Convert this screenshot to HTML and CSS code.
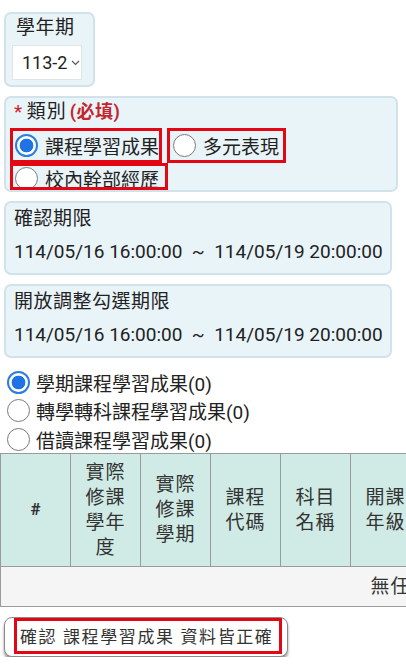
FILE: index.html
```html
<!DOCTYPE html>
<html lang="zh-Hant">
<head>
<meta charset="utf-8">
<link rel="stylesheet" href="styles.css">
</head>
<body>
<div class="page">
  <div class="box box-term">
    <div class="label">學年期</div>
    <div class="select">
      <span class="select-val">113-2</span>
      <svg class="chev" width="9" height="6" viewBox="0 0 9 6"><path d="M1 1 L4.5 4.5 L8 1" fill="none" stroke="#555" stroke-width="1.1"/></svg>
    </div>
  </div>

  <div class="box box-type">
    <div class="label type-label"><span class="req">*</span><span class="type-name">類別</span><span class="must">(必填)</span></div>
    <div class="type-row">
      <label class="opt opt1 marked"><span class="radio checked"></span><span>課程學習成果</span></label>
      <label class="opt opt2 marked"><span class="radio"></span><span>多元表現</span></label>
    </div>
    <div class="type-row">
      <label class="opt opt3 marked"><span class="radio"></span><span>校內幹部經歷</span></label>
    </div>
  </div>

  <div class="box box-date">
    <div class="label">確認期限</div>
    <div class="date">114/05/16 16:00:00 &nbsp;~ &nbsp;114/05/19 20:00:00</div>
  </div>

  <div class="box box-date">
    <div class="label">開放調整勾選期限</div>
    <div class="date">114/05/16 16:00:00 &nbsp;~ &nbsp;114/05/19 20:00:00</div>
  </div>

  <div class="list">
    <label class="list-item"><span class="radio checked"></span><span>學期課程學習成果(0)</span></label>
    <label class="list-item"><span class="radio"></span><span>轉學轉科課程學習成果(0)</span></label>
    <label class="list-item"><span class="radio"></span><span>借讀課程學習成果(0)</span></label>
  </div>

  <div class="table-wrap">
    <table class="grid">
      <colgroup>
        <col class="c"><col class="c"><col class="c"><col class="c"><col class="c"><col class="c">
        <col class="c"><col class="c"><col class="c"><col class="c"><col class="c"><col class="c">
      </colgroup>
      <thead>
        <tr>
          <th class="hash">#</th>
          <th>實際修課學年度</th>
          <th>實際修課學期</th>
          <th>課程代碼</th>
          <th>科目名稱</th>
          <th>開課年級</th>
          <th>修課學分</th>
          <th>成績</th>
          <th>課程類別</th>
          <th>認證狀態</th>
          <th>勾選</th>
          <th>備註</th>
        </tr>
      </thead>
      <tbody>
        <tr><td class="empty" colspan="12">無任何資料</td></tr>
      </tbody>
    </table>
  </div>

  <div class="actions">
    <button class="confirm" type="button"><span class="confirm-text">確認 課程學習成果 資料皆正確</span></button>
  </div>
</div>
</body>
</html>
```

FILE: styles.css
```css
html, body {
  margin: 0;
  padding: 0;
  background: #ffffff;
}
body {
  font-family: Roboto, "Noto Sans CJK TC", sans-serif;
  font-size: 19px;
  color: #222222;
}
.page {
  padding-top: 12px;
  width: 406px;
  overflow: hidden;
}
.box {
  box-sizing: border-box;
  margin: 0 0 9px 4px;
  background: #e9f4f9;
  border: 2px solid #d2e2ea;
  border-radius: 7px;
}
.label {
  line-height: 28px;
  height: 28px;
  white-space: nowrap;
  letter-spacing: 0.5px;
}
.box-term {
  width: 91px;
  height: 75px;
  padding: 0 6px 0 6px;
}
.box-term .label {
  padding-left: 4px;
}
.select {
  box-sizing: border-box;
  margin-top: 3px;
  width: 70px;
  height: 35px;
  background: #ffffff;
  border: 1px solid #dfe5e8;
  display: flex;
  align-items: center;
  padding-left: 9px;
  gap: 4px;
  font-size: 18px;
  white-space: nowrap;
}
.select-val {
  flex: 0 0 auto;
}
.chev {
  display: block;
  flex: 0 0 auto;
  margin-top: 1px;
}
.box-type {
  width: 394px;
  height: 96px;
  padding: 0 4px;
}
.type-label {
  padding-left: 4px;
}
.req {
  color: #d0202a;
}
.type-name {
  margin-left: 4px;
  letter-spacing: 1px;
}
.must {
  color: #c4262e;
  font-weight: bold;
  font-size: 18px;
  margin-left: 3px;
}
.type-row {
  display: flex;
  align-items: stretch;
}
.opt {
  box-sizing: border-box;
  display: flex;
  align-items: center;
  gap: 7px;
  white-space: nowrap;
}
.marked {
  outline: 3px solid #e30613;
  outline-offset: -3px;
}
.opt1 {
  margin-top: 2px;
  width: 152px;
  height: 35px;
  padding-left: 5px;
}
.opt2 {
  margin-top: 2px;
  margin-left: 5px;
  width: 119px;
  height: 35px;
  padding-left: 6px;
}
.opt3 {
  width: 158px;
  height: 27px;
  padding-left: 5px;
  padding-top: 3px;
}
.radio {
  box-sizing: border-box;
  flex: 0 0 auto;
  width: 23px;
  height: 23px;
  border-radius: 50%;
  border: 1.5px solid #7a7a7a;
  background: #ffffff;
  display: block;
}
.radio.checked {
  border: 2px solid #2a7de1;
  background: radial-gradient(circle, #1f73e6 0, #1f73e6 6.5px, #ffffff 7.2px);
}
.box-date {
  width: 388px;
  height: 74px;
  padding: 2px 8px 0 8px;
}
.date {
  margin-top: 5px;
  line-height: 28px;
  white-space: nowrap;
}
.list {
  margin-top: 10px;
  padding-left: 7px;
}
.list-item {
  display: flex;
  align-items: center;
  gap: 6px;
  height: 28.5px;
  white-space: nowrap;
}
.table-wrap {
  width: 406px;
  overflow: hidden;
  margin-top: -1px;
}
.grid {
  border-collapse: collapse;
  table-layout: fixed;
  width: 840px;
}
.grid col.c {
  width: 70px;
}
.grid th,
.grid td {
  border: 1px solid #9a9a9a;
}
.grid th {
  background: #d0ebe5;
  font-weight: normal;
  color: #333333;
  line-height: 25px;
  letter-spacing: 1px;
  padding: 6px 8px;
  vertical-align: middle;
  text-align: center;
}
.grid th.hash {
  font-weight: bold;
  font-size: 17px;
  letter-spacing: 0;
}
.grid td.empty {
  background: #f5f5f5;
  text-align: center;
  line-height: 25px;
  letter-spacing: 1px;
  padding: 7px 0;
  color: #333333;
}
.actions {
  margin-top: 10px;
  padding-left: 4px;
}
.confirm {
  box-sizing: border-box;
  width: 284px;
  height: 40px;
  padding: 0 5px 2px 9px;
  margin: 0;
  background: #ffffff;
  border: 1px solid #8a8a8a;
  border-radius: 8px;
  box-shadow: 0 3px 3px rgba(0, 0, 0, 0.4);
  display: flex;
  align-items: stretch;
  font-family: Roboto, "Noto Sans CJK TC", sans-serif;
}
.confirm-text {
  box-sizing: border-box;
  flex: 1;
  border: 3px solid #e30613;
  display: flex;
  align-items: center;
  padding-left: 3px;
  font-size: 17px;
  letter-spacing: 1.6px;
  color: #333333;
  white-space: nowrap;
}
```
